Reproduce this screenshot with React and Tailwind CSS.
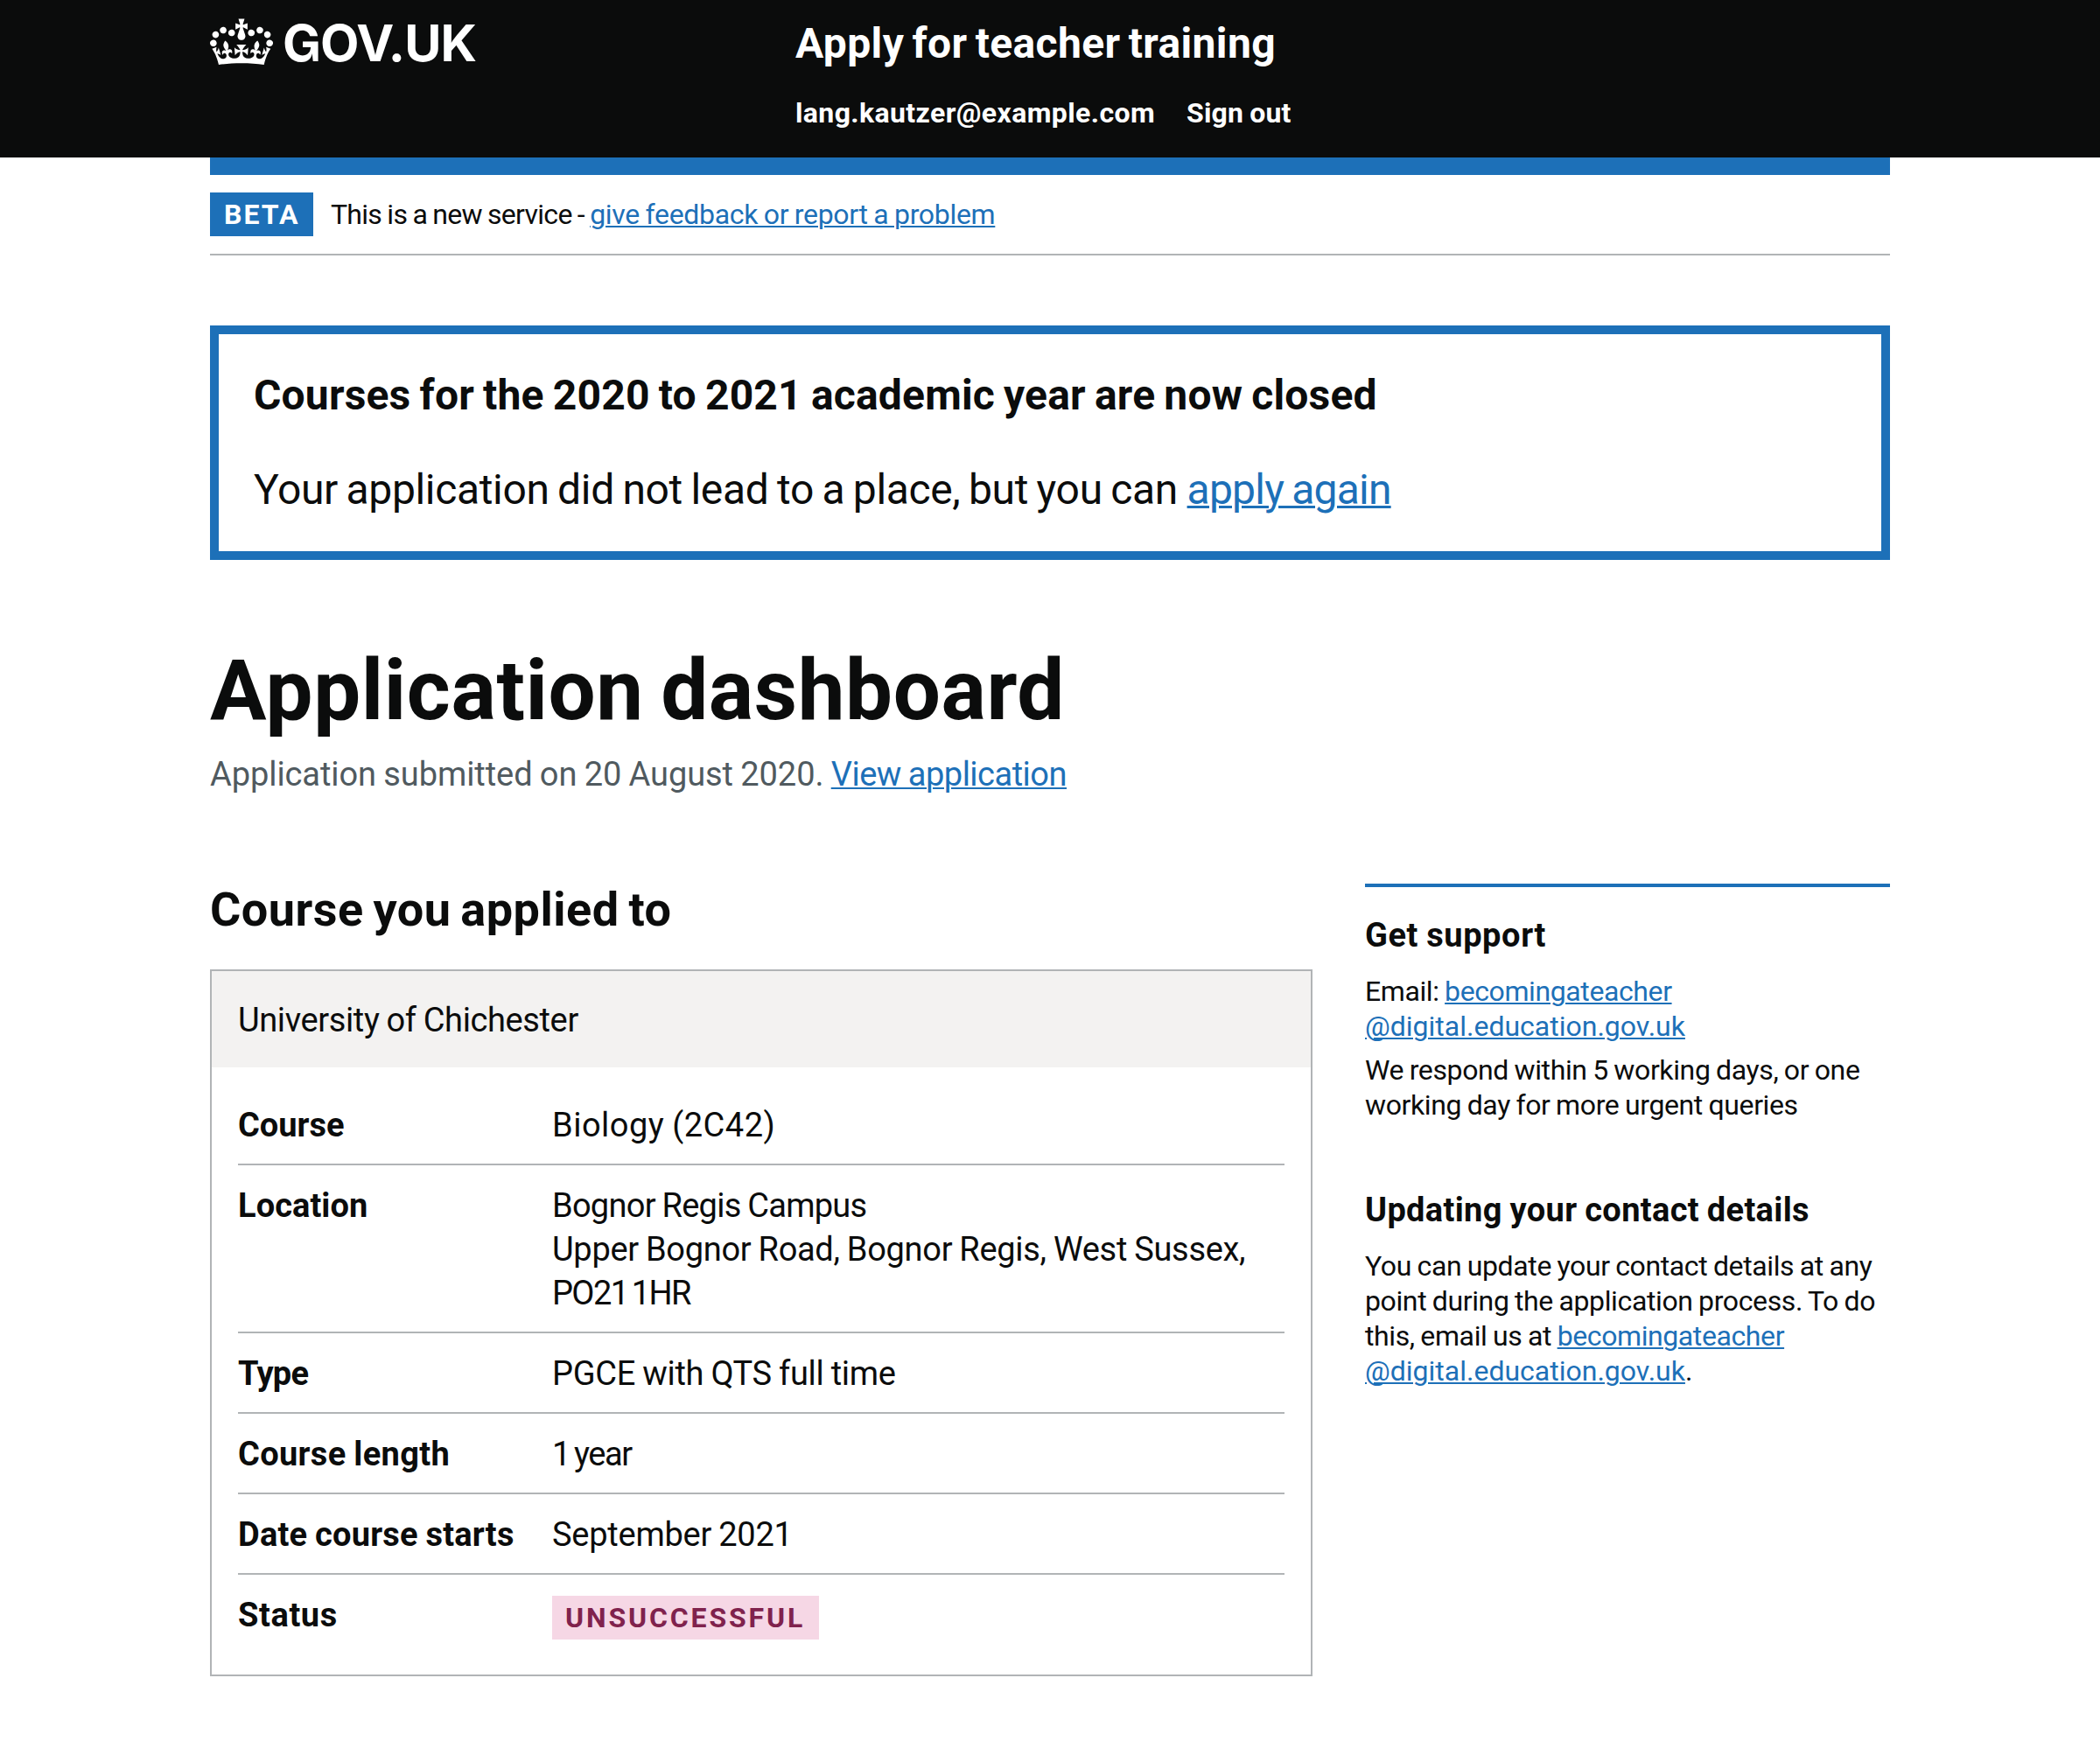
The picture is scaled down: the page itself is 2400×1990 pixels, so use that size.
const ROWS = [
  { term: "Course", termClass: "tracking-[0px]", lines: [["Biology (2C42)", "tracking-[0.5px]"]] },
  {
    term: "Location",
    termClass: "tracking-[0.07px]",
    lines: [
      ["Bognor Regis Campus", "tracking-[-0.74px]"],
      ["Upper Bognor Road, Bognor Regis, West Sussex,", "tracking-[-0.3px]"],
      ["PO21 1HR", "tracking-[-1.6px] [word-spacing:-3.5px]"],
    ],
  },
  { term: "Type", termClass: "tracking-[-0.7px]", lines: [["PGCE with QTS full time", "tracking-[-0.28px]"]] },
  { term: "Course length", termClass: "tracking-[0.33px]", lines: [["1 year", "tracking-[-1.4px] [word-spacing:-3px]"]] },
  { term: "Date course starts", termClass: "tracking-[0.22px]", lines: [["September 2021", "tracking-[-0.25px]"]] },
  { term: "Status", termClass: "tracking-[0.6px]", tag: "Unsuccessful" },
];

function Crown() {
  return (
    <svg viewBox="0 0 132 97" className="h-[60px] w-[72px]" aria-hidden="true">
      <path
        fill="currentColor"
        fillRule="evenodd"
        d="M25 30.2c3.5 1.5 7.7-.2 9.1-3.7 1.5-3.6-.2-7.8-3.9-9.2-3.6-1.4-7.6.3-9.1 3.9-1.4 3.5.3 7.5 3.9 9zM9 39.5c3.6 1.5 7.8-.2 9.2-3.7 1.5-3.6-.2-7.8-3.9-9.1-3.6-1.5-7.6.2-9.1 3.8-1.4 3.5.3 7.5 3.8 9zM4.4 57.2c3.5 1.5 7.7-.2 9.1-3.8 1.5-3.6-.2-7.7-3.9-9.1-3.5-1.5-7.6.3-9.1 3.8-1.4 3.5.3 7.6 3.9 9.1zm38.3-21.4c3.5 1.5 7.7-.2 9.1-3.8 1.5-3.6-.2-7.7-3.9-9.1-3.6-1.5-7.6.3-9.1 3.8-1.3 3.6.4 7.7 3.9 9.1zm64.4-5.6c-3.6 1.5-7.8-.2-9.1-3.7-1.5-3.6.2-7.8 3.8-9.2 3.6-1.4 7.7.3 9.2 3.9 1.3 3.5-.4 7.5-3.9 9zm15.9 9.3c-3.6 1.5-7.7-.2-9.1-3.7-1.5-3.6.2-7.8 3.7-9.1 3.6-1.5 7.7.2 9.2 3.8 1.5 3.5-.3 7.5-3.8 9zm4.7 17.7c-3.6 1.5-7.8-.2-9.2-3.8-1.5-3.6.2-7.7 3.9-9.1 3.6-1.5 7.7.3 9.2 3.8 1.3 3.5-.4 7.6-3.9 9.1zM89.3 35.8c-3.6 1.5-7.8-.2-9.2-3.8-1.4-3.6.2-7.7 3.9-9.1 3.6-1.5 7.7.3 9.2 3.8 1.4 3.6-.3 7.7-3.9 9.1zM69.7 17.7l8.9 4.7V9.3l-8.9 2.8c-.2-.3-.5-.6-.9-.9L72.4 0H59.6l3.5 11.2c-.3.3-.6.5-.9.9l-8.8-2.8v13.1l8.8-4.7c.3.3.6.7.9.9l-5 15.4v.1c-.2.8-.4 1.6-.4 2.4 0 4.1 3.1 7.5 7 8.1h.2c.3 0 .7.1 1 .1.4 0 .7 0 1-.1h.2c4-.6 7.1-4.1 7.1-8.1 0-.8-.1-1.7-.4-2.4V34l-5.1-15.4c.4-.2.7-.6 1-.9zM66 92.8c16.9 0 32.8 1.1 47.1 3.2 4-16.9 8.9-26.7 14-33.5l-9.6-3.4c1 4.9 1.1 7.2 0 10.2-1.5-1.4-3-4.3-4.2-8.7L108.6 76c2.8-2 5-3.2 7.5-3.3-4.4 9.4-10 11.9-13.6 11.2-4.3-.8-6.3-4.6-5.6-7.9 1-4.7 5.7-5.9 8-.5 4.3-8.7-3-11.4-7.6-8.8 7.1-7.2 7.9-13.5 2.1-21.1-8 6.1-8.1 12.3-4.5 20.8-4.7-5.4-12.1-2.5-9.5 6.2 3.4-5.2 7.9-2 7.2 3.1-.6 4.3-6.4 7.8-13.5 7.2-10.3-.9-10.9-8-11.2-13.8 2.5-.5 7.1 1.8 11 7.3L80.2 60c-4.1 4.4-8 5.3-12.3 5.4 1.4-4.4 8-11.6 8-11.6H55.5s6.4 7.2 7.9 11.6c-4.2-.1-8-1-12.3-5.4l1.4 16.4c3.9-5.5 8.5-7.7 10.9-7.3-.3 5.8-.9 12.8-11.1 13.8-7.2.6-12.9-2.9-13.5-7.2-.7-5 3.8-8.3 7.1-3.1 2.7-8.7-4.6-11.6-9.4-6.2 3.7-8.5 3.6-14.7-4.6-20.8-5.8 7.6-5 13.9 2.2 21.1-4.7-2.6-11.9.1-7.7 8.8 2.3-5.5 7.1-4.2 8.1.5.7 3.3-1.3 7.1-5.7 7.9-3.5.7-9-1.8-13.5-11.2 2.5.1 4.7 1.3 7.5 3.3l-4.7-15.4c-1.2 4.4-2.7 7.2-4.3 8.7-1.1-3-.9-5.3 0-10.2l-9.5 3.4c5 6.9 9.9 16.7 14 33.5 14.8-2.1 30.8-3.2 47.7-3.2z"
      />
    </svg>
  );
}

function Link({ className = "decoration-2", children }) {
  return (
    <a href="#" className={"text-[#1d70b8] underline underline-offset-2 " + className}>
      {children}
    </a>
  );
}

function SupportEmail() {
  return (
    <Link className="decoration-2 tracking-[-0.4px]">
      becomingateacher
      <br />
      <span className="tracking-[0px]">@digital.education.gov.uk</span>
    </Link>
  );
}

function SummaryRow({ term, termClass, lines, tag }) {
  return (
    <div className="flex border-b-2 border-[#b1b4b6] pt-[21px] pb-[19px] last:border-b-0">
      <dt className={"w-[359px] shrink-0 font-bold " + termClass}>{term}</dt>
      <dd className="grow whitespace-nowrap">
        {tag ? (
          <strong className="mt-[3px] block w-[305px] bg-[#f6d7e5] pl-[15px] text-[32px] font-bold tracking-[2.87px] text-[#80224d] uppercase">
            {tag}
          </strong>
        ) : (
          lines.map(([line, lineClass]) => (
            <div key={line} className={lineClass}>
              {line}
            </div>
          ))
        )}
      </dd>
    </div>
  );
}

export default function App() {
  return (
    <div className="min-h-[1990px] bg-white font-[Roboto,'Liberation_Sans',sans-serif] text-[#0b0c0c] [word-spacing:-1px]">
      <header className="h-[180px] bg-[#0b0c0c] text-white">
        <div className="mx-auto flex w-[1920px] items-start">
          <a href="#" className="flex w-[669px] items-start gap-[11px] pt-[18px]">
            <Crown />
            <span className="mt-px font-[Inter,sans-serif] text-[57.7px] leading-[60px] font-bold tracking-[-0.9px] [font-feature-settings:'cv10']">
              GOV.UK
            </span>
          </a>
          <div className="pt-5 font-bold">
            <div className="text-5xl leading-[60px] tracking-[0.36px] [word-spacing:-3px]">
              Apply for teacher training
            </div>
            <nav className="mt-[29px] flex gap-9 text-[32px] leading-10">
              <span className="tracking-[0.39px]">lang.kautzer@example.com</span>
              <a href="#" className="tracking-[0.16px]">Sign out</a>
            </nav>
          </div>
        </div>
      </header>

      <div className="mx-auto w-[1920px]">
        <div className="h-5 bg-[#1d70b8]" />
        <div className="flex items-center gap-5 border-b-2 border-[#b1b4b6] py-5 text-[32px] leading-[50px]">
          <strong className="w-[118px] bg-[#1d70b8] pl-4 font-bold tracking-[2.04px] text-white uppercase">
            Beta
          </strong>
          <p className="tracking-[-0.72px]">
            This is a new service -{" "}
            <Link className="decoration-2 tracking-[-0.32px]">
              give feedback or report a problem
            </Link>
          </p>
        </div>

        <section className="mt-20 border-10 border-[#1d70b8] p-10 text-5xl leading-[60px] [word-spacing:-2px]">
          <h2 className="font-bold tracking-[0.18px]">
            Courses for the 2020 to 2021 academic year are now closed
          </h2>
          <p className="mt-12 tracking-[-0.35px]">
            Your application did not lead to a place, but you can{" "}
            <Link className="ml-px decoration-3 tracking-[-0.78px]">apply again</Link>
          </p>
        </section>

        <h1 className="mt-[99px] text-8xl leading-[100px] font-bold tracking-[0.6px] [word-spacing:-5px]">
          Application dashboard
        </h1>
        <p className="mt-[21px] text-[38px] leading-[50px] tracking-[-0.08px] text-[#505a5f]">
          Application submitted on 20 August 2020.{" "}
          <Link className="decoration-2 tracking-[-0.5px]">View application</Link>
        </p>

        <div className="mt-[100px] flex items-start gap-[60px]">
          <main className="w-[1260px]">
            <h2 className="text-[54px] leading-[60px] font-bold tracking-[0.48px] [word-spacing:-3px]">
              Course you applied to
            </h2>
            <article className="mt-[38px] border-2 border-[#b1b4b6] text-[38px] leading-[50px]">
              <h3 className="bg-[#f3f2f1] px-[30px] pt-[31px] pb-[29px] tracking-[-0.38px]">
                University of Chichester
              </h3>
              <dl className="px-[30px] pt-5 pb-[21px]">
                {ROWS.map((row) => (
                  <SummaryRow key={row.term} {...row} />
                ))}
              </dl>
            </article>
          </main>

          <aside className="w-[600px] border-t-4 border-[#1d70b8] pt-[30px] text-[32px] leading-10">
            <h2 className="text-[38px] leading-[50px] font-bold tracking-[0.6px]">Get support</h2>
            <p className="mt-[19px] tracking-[-0.4px]">
              Email: <SupportEmail />
            </p>
            <p className="mt-2.5 tracking-[-0.38px]">
              We respond within 5 working days, or one
              <br />
              working day for more urgent queries
            </p>
            <h2 className="mt-[75px] text-[38px] leading-[50px] font-bold tracking-[0.34px]">
              Updating your contact details
            </h2>
            <p className="mt-[19px] tracking-[-0.38px]">
              You can update your contact details at any
              <br />
              point during the application process. To do
              <br />
              this, email us at <SupportEmail />.
            </p>
          </aside>
        </div>
      </div>
    </div>
  );
}
